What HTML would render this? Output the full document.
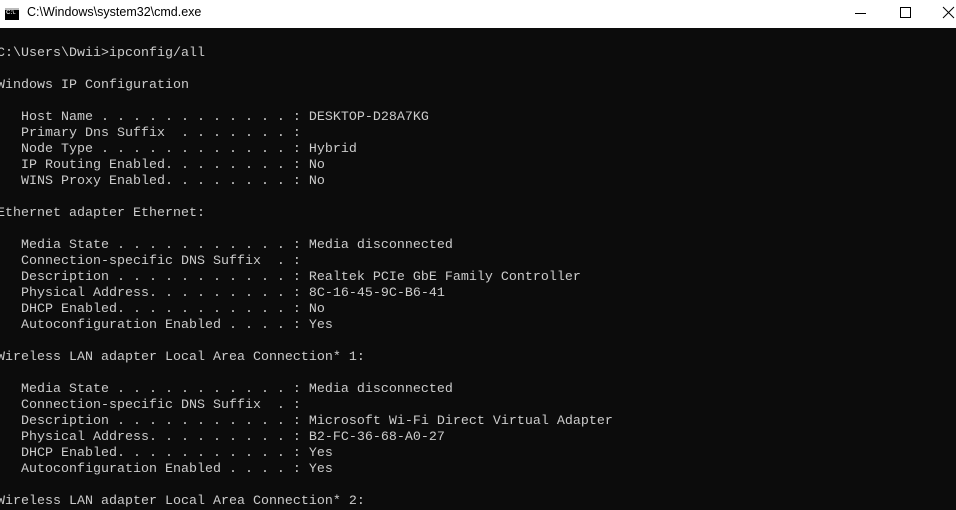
<!DOCTYPE html>
<html><head><style>
body{margin:0;width:956px;height:502px;overflow:hidden;background:#0c0c0c;position:relative}
#tb{position:absolute;left:0;top:0;width:956px;height:28px;background:#fff}
#tt{position:absolute;left:27px;top:5px;font:12.5px "Liberation Sans",sans-serif;color:#000}
#ic{position:absolute;left:5px;top:8px;width:14px;height:10px;background:#000;border-top:2px solid #bbb}
#ic span{position:absolute;left:1px;top:0;font:bold 6px "Liberation Sans";color:#ddd}
pre{position:absolute;left:-3px;top:46px;margin:0;font:13.33px/16px "Liberation Mono",monospace;color:#cccccc;letter-spacing:0}
</style></head><body>
<div id="tb">
<div id="ic"><span>C:\.</span></div>
<div id="tt">C:\Windows\system32\cmd.exe</div>
<svg style="position:absolute;left:850px;top:4px" width="106" height="20">
<line x1="5" y1="9.5" x2="16" y2="9.5" stroke="#000"/>
<rect x="50.5" y="3.5" width="10" height="10" fill="none" stroke="#000"/>
<path d="M93 3 L104 14 M104 3 L93 14" stroke="#000"/>
</svg>
</div>
<pre>C:\Users\Dwii>ipconfig/all

Windows IP Configuration

   Host Name . . . . . . . . . . . . : DESKTOP-D28A7KG
   Primary Dns Suffix  . . . . . . . :
   Node Type . . . . . . . . . . . . : Hybrid
   IP Routing Enabled. . . . . . . . : No
   WINS Proxy Enabled. . . . . . . . : No

Ethernet adapter Ethernet:

   Media State . . . . . . . . . . . : Media disconnected
   Connection-specific DNS Suffix  . :
   Description . . . . . . . . . . . : Realtek PCIe GbE Family Controller
   Physical Address. . . . . . . . . : 8C-16-45-9C-B6-41
   DHCP Enabled. . . . . . . . . . . : No
   Autoconfiguration Enabled . . . . : Yes

Wireless LAN adapter Local Area Connection* 1:

   Media State . . . . . . . . . . . : Media disconnected
   Connection-specific DNS Suffix  . :
   Description . . . . . . . . . . . : Microsoft Wi-Fi Direct Virtual Adapter
   Physical Address. . . . . . . . . : B2-FC-36-68-A0-27
   DHCP Enabled. . . . . . . . . . . : Yes
   Autoconfiguration Enabled . . . . : Yes

Wireless LAN adapter Local Area Connection* 2:</pre>
</body></html>
